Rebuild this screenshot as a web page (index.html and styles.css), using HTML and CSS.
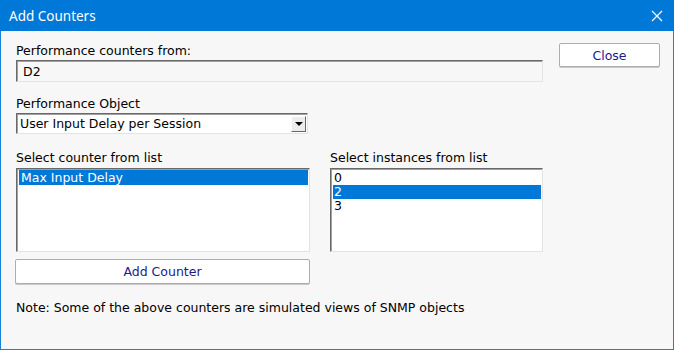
FILE: index.html
```html
<!DOCTYPE html>
<html lang="en">
  <head>
    <meta charset="UTF-8" />
    <title>Add Counters</title>
    <link rel="stylesheet" href="styles.css">
  </head>
  <body>
    <div class="window">
      <div class="titlebar">
        <span class="title">Add Counters</span>
        <svg class="closeIcon" width="12" height="12" viewBox="0 0 12 12">
          <path d="M1 1 L11 11 M11 1 L1 11" stroke="#fff" stroke-width="1.2" />
        </svg>
      </div>

      <div class="content">
        <div class="main">
          <div class="label">Performance counters from:</div>
          <div class="field">D2</div>

          <div class="label objLabel">Performance Object</div>
          <div class="combo">
            <span class="comboText">User Input Delay per Session</span>
            <span class="comboBtn">
              <svg width="8" height="4" viewBox="0 0 8 4">
                <path d="M0 0 L8 0 L4 4 Z" fill="#000" />
              </svg>
            </span>
          </div>

          <div class="lists">
            <div class="listCol counterCol">
              <div class="label">Select counter from list</div>
              <div class="listbox">
                <div class="item selected">Max Input Delay</div>
              </div>
              <button class="btn addBtn">Add Counter</button>
            </div>
            <div class="listCol instCol">
              <div class="label">Select instances from list</div>
              <div class="listbox">
                <div class="item">0</div>
                <div class="item selected">2</div>
                <div class="item">3</div>
              </div>
            </div>
          </div>

          <div class="note">Note: Some of the above counters are simulated views of SNMP objects</div>
        </div>

        <div class="side">
          <button class="btn closeBtn">Close</button>
        </div>
      </div>
    </div>
  </body>
</html>
```

FILE: styles.css
```css
body {
  margin: 0;
  background: #fff;
}

.window {
  width: 674px;
  height: 350px;
  box-sizing: border-box;
  border: 1px solid #1883d7;
  border-top: none;
  background: #f7f7f7;
  font-family: "DejaVu Sans", sans-serif;
  font-size: 12.5px;
  color: #000;
}

.titlebar {
  height: 31px;
  margin: 0 -1px;
  background: #0078d7;
  display: flex;
  align-items: center;
  justify-content: space-between;
  padding: 0 11px 0 9px;
}

.title {
  font-family: "Noto Sans", sans-serif;
  font-size: 13.5px;
  color: #fff;
}

.content {
  display: flex;
  padding: 12px 0 0 15px;
}

.main {
  width: 527px;
}

.label {
  height: 15px;
  line-height: 15px;
}

.field {
  margin-top: 2px;
  height: 22px;
  box-sizing: border-box;
  border: 1px solid;
  border-color: #696969 #e3e3e3 #e3e3e3 #696969;
  box-shadow: inset 1px 1px #a0a0a0;
  padding: 3px 0 0 6px;
  line-height: 15px;
}

.objLabel {
  margin-top: 14px;
}

.combo {
  margin-top: 2px;
  width: 292px;
  height: 21px;
  box-sizing: border-box;
  border: 1px solid;
  border-color: #696969 #e3e3e3 #e3e3e3 #696969;
  box-shadow: inset 1px 1px #a0a0a0;
  background: #fff;
  display: flex;
  align-items: center;
  justify-content: space-between;
  padding: 0 1px 0 3px;
}

.comboBtn {
  width: 15px;
  height: 16px;
  box-sizing: border-box;
  background: #ececec;
  border: 1px solid;
  border-color: #fff #696969 #696969 #fff;
  display: flex;
  align-items: center;
  justify-content: center;
}

.lists {
  display: flex;
  margin-top: 16px;
}

.counterCol {
  width: 294px;
}

.instCol {
  margin-left: 20px;
  width: 213px;
}

.listbox {
  margin-top: 3px;
  height: 84px;
  box-sizing: border-box;
  border: 1px solid;
  border-color: #696969 #e3e3e3 #e3e3e3 #696969;
  box-shadow: inset 1px 1px #a0a0a0;
  background: #fff;
  padding: 2px 1px 0 2px;
}

.item {
  height: 14px;
  line-height: 14px;
  padding-left: 1px;
}

.counterCol .item {
  height: 15px;
  line-height: 15px;
  padding-left: 2px;
}

.counterCol .listbox {
  padding-top: 1px;
}

.selected {
  background: #0078d7;
  color: #fff;
}

.btn {
  font-family: "DejaVu Sans", sans-serif;
  font-size: 12.5px;
  color: #1a1a8c;
  background: #fff;
  border: 1px solid #adadad;
  border-radius: 2px;
  box-shadow: 0 1px #c8c8c8;
  cursor: pointer;
}

.addBtn {
  margin: 7px 0 0 -1px;
  width: 295px;
  height: 25px;
}

.note {
  margin-top: 16px;
  line-height: 15px;
}

.side {
  margin-left: 16px;
}

.closeBtn {
  width: 101px;
  height: 24px;
}
```
